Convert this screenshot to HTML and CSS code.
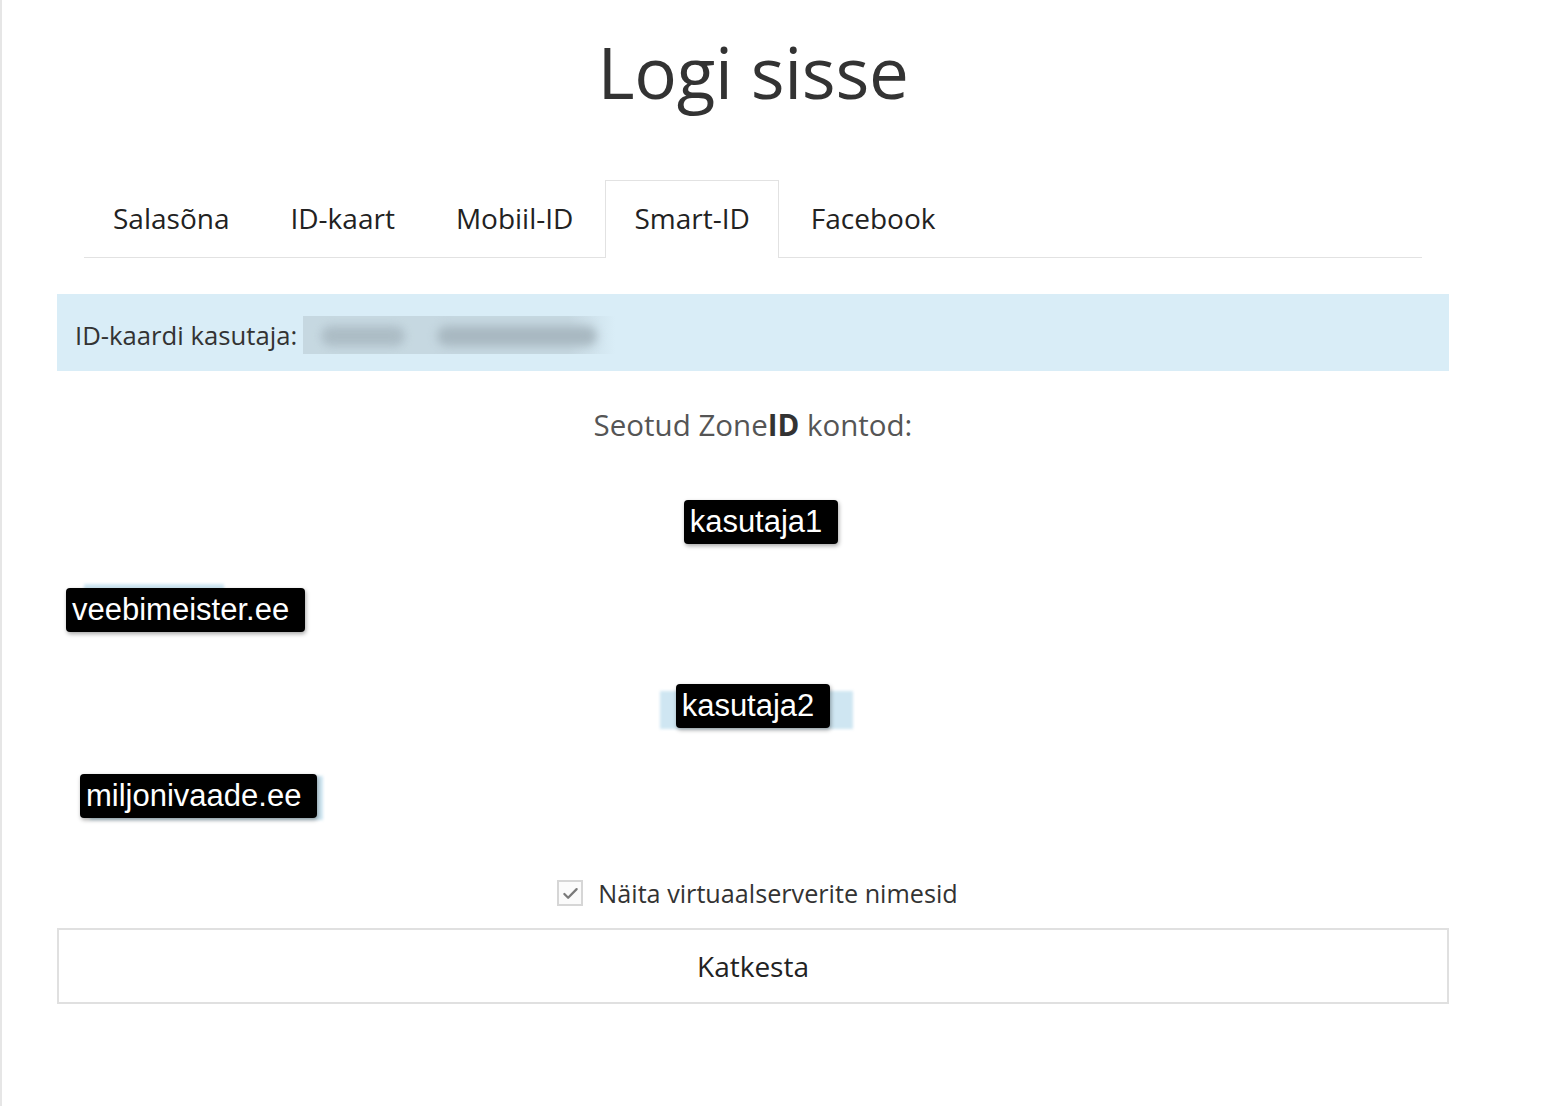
FILE: index.html
```html
<!DOCTYPE html>
<html lang="et">
<head>
<meta charset="utf-8">
<title>Logi sisse</title>
<link rel="stylesheet" href="styles.css">
</head>
<body>
<div class="page">
  <main class="container">
    <h1 class="title">Logi sisse</h1>
    <ul class="tabs">
      <li class="tab">Salasõna</li>
      <li class="tab">ID-kaart</li>
      <li class="tab">Mobiil-ID</li>
      <li class="tab active">Smart-ID</li>
      <li class="tab">Facebook</li>
    </ul>
    <div class="info">
      <span class="info-label">ID-kaardi kasutaja:</span>
      <span class="blurred"><span class="blob b1"></span><span class="blob b2"></span></span>
    </div>
    <h2 class="linked">Seotud Zone<b>ID</b> kontod:</h2>
    <div class="accounts">
      <div class="account">
        <div class="user-row row-1"><span class="tag">kasutaja1</span></div>
        <div class="domain-row row-1"><span class="tag hl-top">veebimeister.ee</span></div>
      </div>
      <div class="account">
        <div class="user-row row-2"><span class="tag hl-wide">kasutaja2</span></div>
        <div class="domain-row row-2"><span class="tag hl-right">miljonivaade.ee</span></div>
      </div>
    </div>
    <label class="check-row">
      <span class="checkbox"><svg viewBox="0 0 24 24" width="21" height="21"><path d="M5 12.5l4.3 4.3L19 7" fill="none" stroke="#7a7a7a" stroke-width="2.6" stroke-linecap="round" stroke-linejoin="round"/></svg></span>
      <span class="check-label">Näita virtuaalserverite nimesid</span>
    </label>
    <button class="cancel" type="button">Katkesta</button>
  </main>
</div>
</body>
</html>
```
FILE: styles.css
```css
html {
  margin: 0;
  padding: 0;
  background: #fff;
}
body {
  margin: 0;
  padding: 0;
  font-family: "Open Sans", "Noto Sans", sans-serif;
  color: #333;
}
.page {
  min-height: 1106px;
  border-left: 2px solid #e6e6e6;
  box-sizing: border-box;
}
.container {
  width: 1392px;
  margin-left: 55px;
  padding-top: 1px;
}
.title {
  margin: 27px 0 0;
  font-size: 71px;
  font-weight: 400;
  line-height: 88px;
  text-align: center;
  color: #333;
  letter-spacing: -0.3px;
}
.tabs {
  list-style: none;
  margin: 64px 27px 0;
  padding: 0;
  display: flex;
  gap: 3px;
  border-bottom: 1px solid #e2e2e2;
}
.tab {
  padding: 0 28px;
  height: 76px;
  line-height: 75px;
  font-size: 28px;
  color: #222;
  border: 1px solid transparent;
  border-bottom: none;
  margin-bottom: -1px;
}
.tab.active {
  border-color: #e2e2e2;
  background: #fff;
  height: 77px;
}
.info {
  margin-top: 36px;
  height: 77px;
  background: #d9edf7;
  display: flex;
  align-items: center;
  padding-left: 18px;
  padding-top: 5px;
  box-sizing: border-box;
}
.info-label {
  font-size: 25.7px;
  color: #333;
}
.blurred {
  margin-left: 6px;
  width: 312px;
  height: 38px;
  background: linear-gradient(to right, #c6d8e1 0%, #c6d8e1 85%, #d9edf7 100%);
  position: relative;
  display: inline-block;
  overflow: hidden;
}
.blob {
  position: absolute;
  top: 10px;
  height: 20px;
  background: #a8b8c1;
  border-radius: 10px;
  filter: blur(5px);
}
.b1 { left: 18px; width: 84px; opacity: 0.85; }
.b2 { left: 134px; width: 160px; }
.linked {
  margin: 34px 0 0;
  font-size: 29.5px;
  font-weight: 400;
  line-height: 40px;
  text-align: center;
  color: #555;
}
.linked b {
  font-weight: 700;
  color: #333;
}
.accounts {
  margin-top: 55px;
}
.user-row {
  text-align: center;
  height: 44px;
}
.user-row.row-1 { padding-left: 16px; }
.domain-row {
  height: 44px;
  margin-top: 44px;
}
.domain-row.row-1 { padding-left: 9px; }
.domain-row.row-2 { padding-left: 23px; margin-top: 46px; }
.account + .account { margin-top: 52px; }
.tag {
  position: relative;
  display: inline-block;
  height: 44px;
  line-height: 44px;
  padding: 0 16px 0 6px;
  background: #000;
  color: #fff;
  border-radius: 4px;
  font-family: "Liberation Sans", Arial, sans-serif;
  font-size: 31px;
  box-shadow: 1px 2px 4px rgba(0, 0, 0, 0.35);
}
.hl-top::before,
.hl-wide::before,
.hl-right::before {
  content: "";
  position: absolute;
  z-index: -1;
  background: #cfe6f2;
  filter: blur(1.5px);
}
.hl-top::before { left: 18px; width: 140px; top: -4px; height: 30px; }
.hl-wide::before { left: -16px; right: -23px; top: 7px; bottom: -1px; }
.hl-right::before { left: 10px; right: -6px; top: 2px; bottom: -2px; }
.check-row {
  margin-top: 58px;
  display: flex;
  justify-content: center;
  align-items: center;
  gap: 15px;
  padding-left: 9px;
}
.checkbox {
  width: 22px;
  height: 22px;
  border: 2px solid #d6d6d6;
  background: #fbfbfb;
  display: flex;
  align-items: center;
  justify-content: center;
}
.check-label {
  font-size: 25.2px;
  color: #333;
  line-height: 34px;
}
.cancel {
  display: block;
  width: 100%;
  margin-top: 18px;
  height: 76px;
  background: #fff;
  border: 2px solid #e0e0e0;
  font-family: "Open Sans", "Noto Sans", sans-serif;
  font-size: 28px;
  color: #222;
  padding: 0;
}
```
